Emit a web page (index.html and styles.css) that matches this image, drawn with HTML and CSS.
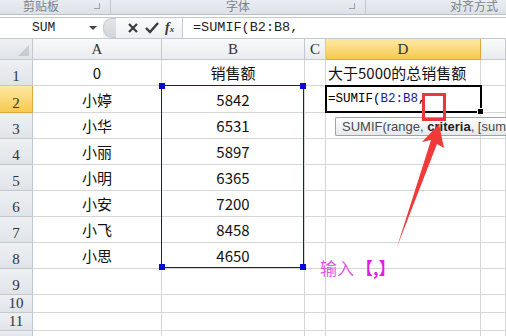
FILE: index.html
```html
<!DOCTYPE html>
<html lang="zh-CN">
<head>
  <meta charset="UTF-8">
  <title>SUMIF</title>
  <link rel="stylesheet" href="styles.css">
</head>
<body>
  <div class="ribbon">
    <div class="group g1"><span>剪贴板</span><i class="launch"></i></div>
    <div class="group g2"><span>字体</span><i class="launch"></i></div>
    <div class="group g3"><span>对齐方式</span></div>
  </div>

  <div class="fbar">
    <div class="namebox"><span>SUM</span><b class="drop"></b></div>
    <div class="btns">
      <span class="pill"></span>
      <svg width="12" height="12" viewBox="0 0 12 12"><path d="M2 2 L10 10 M10 2 L2 10" stroke="#3a3a3a" stroke-width="2.2"/></svg>
      <svg width="14" height="12" viewBox="0 0 14 12"><path d="M1 6 L5 10 L13 1" stroke="#3a3a3a" stroke-width="2.4" fill="none"/></svg>
      <span class="fx">f<sub>x</sub></span>
    </div>
    <div class="formula">=SUMIF(B2:B8,</div>
  </div>

  <div class="sheet">
    <div class="hd corner"><i></i></div>
    <div class="hd col">A</div>
    <div class="hd col">B</div>
    <div class="hd col">C</div>
    <div class="hd col on">D</div>
    <div class="hd col"></div>

    <div class="hd row">1</div><div class="c">0</div><div class="c">销售额</div><div class="c"></div><div class="c l">大于5000的总销售额</div><div class="c"></div>
    <div class="hd row on">2</div><div class="c">小婷</div><div class="c">5842</div><div class="c"></div><div class="c"></div><div class="c"></div>
    <div class="hd row">3</div><div class="c">小华</div><div class="c">6531</div><div class="c"></div><div class="c"></div><div class="c"></div>
    <div class="hd row">4</div><div class="c">小丽</div><div class="c">5897</div><div class="c"></div><div class="c"></div><div class="c"></div>
    <div class="hd row">5</div><div class="c">小明</div><div class="c">6365</div><div class="c"></div><div class="c"></div><div class="c"></div>
    <div class="hd row">6</div><div class="c">小安</div><div class="c">7200</div><div class="c"></div><div class="c"></div><div class="c"></div>
    <div class="hd row">7</div><div class="c">小飞</div><div class="c">8458</div><div class="c"></div><div class="c"></div><div class="c"></div>
    <div class="hd row">8</div><div class="c">小思</div><div class="c">4650</div><div class="c"></div><div class="c"></div><div class="c"></div>
    <div class="hd row">9</div><div class="c"></div><div class="c"></div><div class="c"></div><div class="c"></div><div class="c"></div>
    <div class="hd row">10</div><div class="c"></div><div class="c"></div><div class="c"></div><div class="c"></div><div class="c"></div>
    <div class="hd row">11</div><div class="c"></div><div class="c"></div><div class="c"></div><div class="c"></div><div class="c"></div>
    <div class="hd row"></div><div class="c"></div><div class="c"></div><div class="c"></div><div class="c"></div><div class="c"></div>

    <!-- overlays -->
    <div class="range">
      <i class="h tl"></i><i class="h tr"></i><i class="h bl"></i><i class="h br"></i>
    </div>
    <div class="active">=SUMIF(<span class="ref">B2:B8</span>,<i class="fill"></i></div>
    <div class="tip">SUMIF(range, <b>criteria</b>, [sum_range])</div>
    <div class="mark"></div>
    <svg class="arrow" width="506" height="298" viewBox="0 0 506 298">
      <polygon points="439,85 422,103 431,101 397,208 437,105 444,109" fill="#f03a3a"/>
    </svg>
    <div class="note">输入<b>【,】</b></div>
  </div>
</body>
</html>
```

FILE: styles.css
```css
html, body {
  margin: 0;
  padding: 0;
}
body {
  width: 506px;
  height: 336px;
  overflow: hidden;
  background: #fff;
  font-family: "Noto Sans CJK SC", sans-serif;
}

/* ribbon strip */
.ribbon {
  height: 14px;
  display: flex;
  background: linear-gradient(#e9edf2, #dde2e8);
  border-bottom: 1px solid #b9c0c9;
  font-size: 12px;
  line-height: 13px;
  color: #7b7f86;
  overflow: hidden;
}
.group {
  position: relative;
  border-right: 1px solid #c2c8d0;
  display: flex;
  justify-content: center;
}
.group span {
  margin-top: -1px;
}
.g1 { width: 110px; }
.g1 span { margin-right: 28px; }
.g2 { width: 254px; }
.g3 { flex: 1; border-right: none; justify-content: flex-end; padding-right: 8px; }
.launch {
  position: absolute;
  right: 10px;
  top: 3px;
  width: 5px;
  height: 5px;
  border-right: 1px solid #9aa1aa;
  border-bottom: 1px solid #9aa1aa;
}

/* formula bar */
.fbar {
  margin-top: 2px;
  height: 20px;
  display: flex;
  border-top: 1px solid #c4c9cf;
  border-bottom: 1px solid #c4c9cf;
  background: #fff;
  font-family: "Liberation Mono", monospace;
  color: #222;
}
.namebox {
  width: 103px;
  position: relative;
  font-size: 13px;
  line-height: 20px;
  padding-left: 32px;
  box-sizing: border-box;
}
.drop {
  position: absolute;
  right: 6px;
  top: 8px;
  border-left: 4px solid transparent;
  border-right: 4px solid transparent;
  border-top: 4px solid #444;
}
.btns {
  width: 79px;
  display: flex;
  align-items: center;
  gap: 6px;
  background: linear-gradient(#fafbfc, #eef0f3);
  border-right: 1px solid #c4c9cf;
}
.pill {
  width: 12px;
  height: 18px;
  border-radius: 9px 0 0 9px;
  background: linear-gradient(#e4e6e9, #d2d5d9);
  border: 1px solid #c7cbd0;
  border-right: none;
  margin-right: 5px;
}
.fx {
  font-family: "Liberation Serif", serif;
  font-style: italic;
  font-weight: bold;
  font-size: 14px;
  color: #3a3a3a;
}
.fx sub {
  font-size: 9px;
  vertical-align: 0;
}
.formula {
  padding-left: 10px;
  font-size: 13.5px;
  line-height: 20px;
}

/* grid */
.sheet {
  position: relative;
  display: grid;
  grid-template-columns: 33px 129px 143px 21px 155px 1fr;
  grid-template-rows: 21px 26px 27px 26px 26px 26px 26px 26px 26px 26px 18px 18px 1fr;
  height: 298px;
  overflow: hidden;
}
.c {
  border-right: 1px solid #d6d6d6;
  border-bottom: 1px solid #d6d6d6;
  display: flex;
  align-items: center;
  justify-content: center;
  font-size: 15px;
  color: #111;
  white-space: nowrap;
}
.c.l {
  justify-content: flex-start;
  padding-left: 2px;
}
.hd {
  background: linear-gradient(#eef0f3, #e0e4e9);
  border-right: 1px solid #c3c8ce;
  border-bottom: 1px solid #c3c8ce;
  font-family: "Liberation Serif", "Noto Sans CJK SC", serif;
  font-size: 15px;
  color: #333;
  display: flex;
  justify-content: center;
}
.hd.col {
  align-items: center;
  background: linear-gradient(#f8f9fa, #e9ecef);
}
.hd.row {
  align-items: flex-end;
  padding-bottom: 1px;
  line-height: 16px;
}
.hd.on {
  background: linear-gradient(#fde9a5, #f7c94f);
  border-color: #e3a63a;
}
.corner {
  position: relative;
}
.corner i {
  position: absolute;
  right: 3px;
  bottom: 3px;
  border-left: 11px solid transparent;
  border-bottom: 11px solid #c9cdd3;
}

/* overlays */
.range {
  position: absolute;
  left: 161px;
  top: 46px;
  width: 143px;
  height: 183px;
  border: 1px solid #1010c0;
  box-sizing: border-box;
}
.h {
  position: absolute;
  width: 6px;
  height: 6px;
  background: #0a0ad8;
}
.tl { left: -3px; top: -3px; }
.tr { right: -3px; top: -3px; }
.bl { left: -3px; bottom: -3px; }
.br { right: -3px; bottom: -3px; }

.active {
  position: absolute;
  left: 325px;
  top: 46px;
  width: 157px;
  height: 28px;
  box-sizing: border-box;
  border: 2px solid #000;
  font-family: "Liberation Mono", monospace;
  font-size: 12.5px;
  line-height: 24px;
  padding-left: 1px;
  background: #fff;
}
.ref { color: #1a1aa8; }
.fill {
  position: absolute;
  right: -4px;
  bottom: -4px;
  width: 5px;
  height: 5px;
  background: #000;
  border: 1px solid #fff;
}
.tip {
  position: absolute;
  left: 335px;
  top: 78px;
  width: 171px;
  height: 19px;
  padding-left: 6px;
  box-sizing: border-box;
  border: 1px solid #9ea3a9;
  border-right: none;
  border-radius: 2px 0 0 2px;
  background: linear-gradient(#ffffff, #e6e8ec);
  font-family: "Liberation Sans", sans-serif;
  font-size: 13px;
  line-height: 18px;
  color: #4a4a4a;
  white-space: nowrap;
  overflow: hidden;
}
.tip b { color: #222; }
.mark {
  position: absolute;
  left: 422px;
  top: 54px;
  width: 24px;
  height: 28px;
  box-sizing: border-box;
  border: 3px solid #e8383d;
}
.arrow {
  position: absolute;
  left: 0;
  top: 0;
}
.note {
  position: absolute;
  left: 320px;
  top: 218px;
  font-size: 17px;
  line-height: 22px;
  color: #e455e4;
}
.note b {
  color: #e01fe0;
  margin-left: 2px;
}
```
